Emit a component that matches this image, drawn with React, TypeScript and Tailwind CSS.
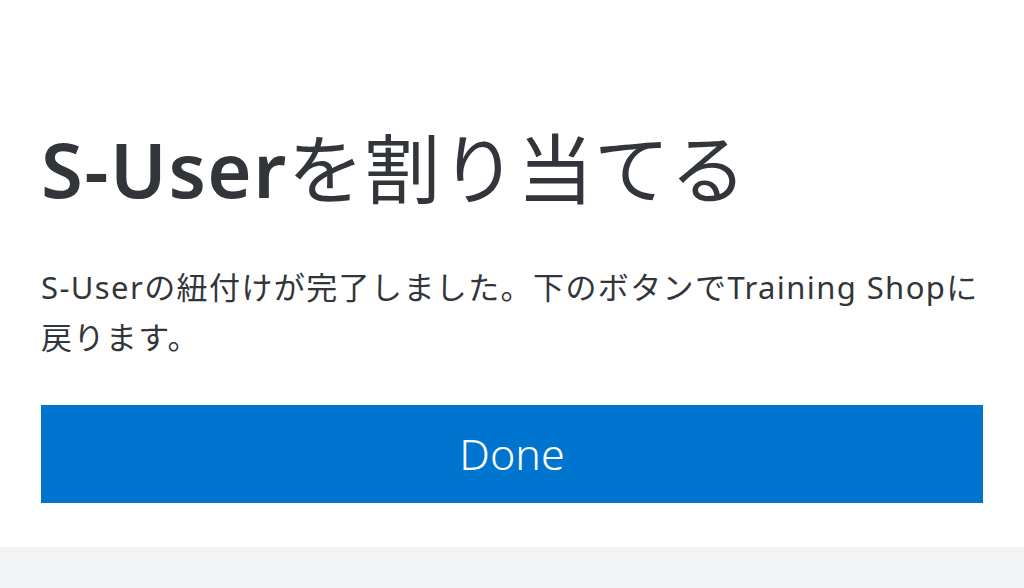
export default function App() {
    const font = { fontFamily: '"Noto Sans", "Noto Sans CJK JP", sans-serif' };

    return (
        <div className="flex h-[588px] w-[1024px] flex-col bg-white text-[#32363a]" style={font}>
            <div className="flex-1 px-[41px] pt-[121px]">
                <h1 className="whitespace-nowrap text-[76px] leading-[96px]">
                    <span className="font-semibold tracking-[1.5px]">S-User</span>
                    <span className="font-normal tracking-[0.5px]">を割り当てる</span>
                </h1>
                <p className="mt-[45px] whitespace-nowrap text-[31px] leading-[50px] tracking-[1.4px]">
                    S-Userの紐付けが完了しました。下のボタンでTraining Shopに
                    <br />
                    戻ります。
                </p>
                <button className="mt-[43px] flex h-[98px] w-full items-center justify-center bg-[#0075d0] text-[43px] font-light text-white">
                    Done
                </button>
            </div>
            <div className="h-[41px] bg-[#f2f3f4]" />
        </div>
    );
}
